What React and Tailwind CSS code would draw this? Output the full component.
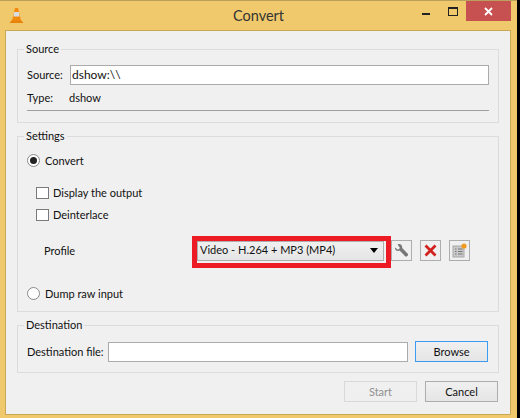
import React from "react";

const Radio = ({ checked, label }) => (
  <div className="flex items-center h-[13px]">
    <span className="w-[13px] h-[13px] rounded-full border border-[#8a8a8a] bg-white flex items-center justify-center">
      {checked && <span className="w-[7px] h-[7px] rounded-full bg-[#222]" />}
    </span>
    <span className="ml-[5px] pt-[2px]">{label}</span>
  </div>
);

const Check = ({ label }) => (
  <div className="flex items-center h-[12px] ml-[9px]">
    <span className="w-[13px] h-[12px] border border-[#7a7a7a] bg-white" />
    <span className="ml-[4px]">{label}</span>
  </div>
);

const Group = ({ title, className, children }) => (
  <fieldset className={`border border-[#dcdcdc] mx-[11px] px-[9px] ${className}`}>
    <legend className="-ml-[3px] px-[2px] h-[16px] leading-[16px]">{title}</legend>
    {children}
  </fieldset>
);

const ToolButton = ({ children }) => (
  <button className="w-[21px] h-[21px] border border-[#adadad] bg-[#f0f0f0] flex items-center justify-center">
    {children}
  </button>
);

const Button = ({ children, className }) => (
  <button className={`w-[73px] h-[21px] border pt-[1px] bg-gradient-to-b from-[#f0f0f0] to-[#e5e5e5] ${className}`}>
    {children}
  </button>
);

const Cone = () => (
  <svg width="15" height="17" viewBox="0 0 15 17">
    <path d="M0.5 16 L3 13 H12 L14.5 16 Z" fill="#e8820c" />
    <path d="M6 1 H9 L12 13.5 H3 Z" fill="#f28a0f" />
    <path d="M5.2 5 H9.8 L10.6 9.5 H4.4 Z" fill="#d8dde2" />
  </svg>
);

const Wrench = () => (
  <svg width="15" height="15" viewBox="0 0 15 15">
    <path
      d="M1 4.5 L4 6.8 L6 5 L3.6 1.6 C6 0.2 8.6 2 8.2 5 L14 11 C14.6 12 12.6 14.2 11.4 13.4 L5.6 7.6 C3 8.6 0.6 7 1 4.5 Z"
      fill="#777777"
    />
  </svg>
);

const Cross = () => (
  <svg width="13" height="13" viewBox="0 0 13 13">
    <path d="M1.5 1.5 L11.5 11.5 M11.5 1.5 L1.5 11.5" stroke="#d3211d" strokeWidth="2.8" />
  </svg>
);

const ProfileList = () => (
  <svg width="15" height="15" viewBox="0 0 15 15">
    <rect x="1" y="3" width="11" height="11" fill="#c9c9c9" stroke="#a8a8a8" />
    <path d="M3 6 H4.5 M6 6 H10.5 M3 8.5 H4.5 M6 8.5 H10.5 M3 11 H4.5 M6 11 H10.5" stroke="#777" />
    <circle cx="12" cy="3" r="2.6" fill="#f39a1e" />
  </svg>
);

export default function App() {
  return (
    <div
      className="w-[520px] h-[418px] flex bg-black text-[11px] text-[#111] overflow-hidden"
      style={{ fontFamily: 'Lato, "Open Sans", sans-serif' }}
    >
      <div className="w-[517px] h-[418px] bg-[#f0c96c] border-t border-[#b9a05c] flex flex-col">
        {/* Title bar */}
        <div className="h-[29px] grid grid-cols-[1fr_auto_1fr]">
          <div className="pl-[9px] pt-[6px]">
            <Cone />
          </div>
          <div className="text-[14.5px] leading-[29px] text-[#333]">Convert</div>
          <div className="flex justify-end items-start pr-[6px]">
            <span className="w-[8px] h-[2px] bg-[#222] mt-[12px]" />
            <span className="w-[10px] h-[9px] border border-[#222] border-t-2 mt-[6px] ml-[18px]" />
            <span className="w-[45px] h-[20px] bg-[#c75050] ml-[8px] flex items-center justify-center">
              <svg width="9" height="9" viewBox="0 0 9 9">
                <path d="M1 1 L8 8 M8 1 L1 8" stroke="#fff" strokeWidth="1.8" />
              </svg>
            </span>
          </div>
        </div>

        {/* Dialog body */}
        <div className="ml-[5px] mr-[6px] h-[385px] bg-[#f0f0f0] border border-[#c9a855] pt-[10px] flex flex-col">
          <Group title="Source" className="h-[82px]">
            <div className="flex items-center mt-[8px]">
              <span className="w-[43px]">Source:</span>
              <div className="flex-1 h-[20px] bg-white border border-[#ababab] px-[1px] leading-[18px] text-[12px]">
                dshow:\\
              </div>
            </div>
            <div className="flex items-center h-[16px] mt-[5px]">
              <span className="w-[42px]">Type:</span>
              <span>dshow</span>
            </div>
            <div className="h-px bg-[#a0a0a0] mt-[4px]" />
          </Group>

          <Group title="Settings" className="h-[184px] mt-[5px]">
            <div className="mt-[10px]">
              <Radio checked label="Convert" />
            </div>
            <div className="mt-[20px]">
              <Check label="Display the output" />
            </div>
            <div className="mt-[10px]">
              <Check label="Deinterlace" />
            </div>
            <div className="flex items-center h-[21px] mt-[19px]">
              <span className="w-[170px] pl-[17px] pt-[2px]">Profile</span>
              <div className="relative w-[187px] h-[20px] border border-[#adadad] bg-gradient-to-b from-[#f0f0f0] to-[#e5e5e5] flex items-center justify-between pl-[2px] pr-[5px]">
                <span>Video - H.264 + MP3 (MP4)</span>
                <span className="w-0 h-0 border-x-[4px] border-x-transparent border-t-[5px] border-t-black" />
                {/* red highlight drawn over the screenshot */}
                <span className="absolute -top-[6px] -left-[6px] -right-[8px] -bottom-[8px] border-[5px] border-[#ed1c24]" />
              </div>
              <div className="flex gap-[8px] ml-[7px]">
                <ToolButton><Wrench /></ToolButton>
                <ToolButton><Cross /></ToolButton>
                <ToolButton><ProfileList /></ToolButton>
              </div>
            </div>
            <div className="mt-[26px]">
              <Radio label="Dump raw input" />
            </div>
          </Group>

          <Group title="Destination" className="h-[56px] mt-[5px]">
            <div className="flex items-center mt-[8px]">
              <span className="w-[81px] whitespace-nowrap pt-[2px]">Destination file:</span>
              <div className="w-[300px] h-[20px] bg-white border border-[#ababab]" />
              <Button className="ml-[7px] border-[#3c9bf0] text-[#111]">Browse</Button>
            </div>
          </Group>

          <div className="flex justify-end gap-[8px] mt-[8px] mr-[12px]">
            <Button className="border-[#d9d9d9] text-[#8f8f8f] from-[#efefef] to-[#efefef]">Start</Button>
            <Button className="border-[#adadad] text-[#111]">Cancel</Button>
          </div>
        </div>
      </div>
    </div>
  );
}
